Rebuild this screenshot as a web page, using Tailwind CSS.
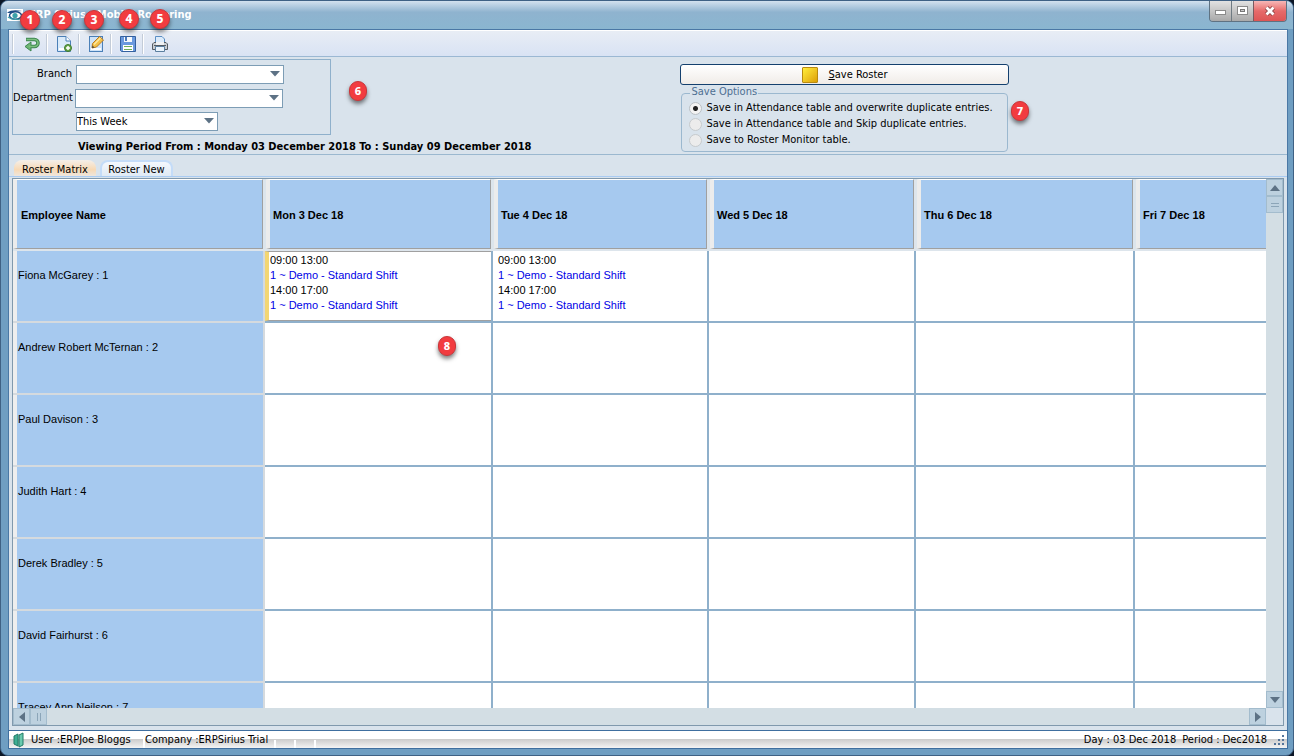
<!DOCTYPE html>
<html lang="en">
    <head>
        <meta charset="UTF-8" />
        <title>ERP Sirius - Mobile Rostering</title>
        <script src="https://cdn.jsdelivr.net/npm/@tailwindcss/browser@4"></script>
    </head>

    <body class="bg-[#0b1626]">
        <div class="relative flex flex-col h-screen overflow-hidden pl-[7px] pr-[5px] pb-1.5 rounded-lg border border-[#3f6184] bg-[#6f9ec2] font-['DejaVu_Sans_Condensed','DejaVu_Sans',sans-serif] text-[11px] leading-4 text-black">
            <!-- title bar -->
            <header class="flex items-start justify-between h-7 shrink-0 -ml-[7px] -mr-[5px] pl-1.5 pr-1.5 bg-linear-to-b from-[#d3e1ee] via-[#8fb3cf] via-40% to-[#8ab6d0]">
                <div class="flex items-center gap-1.5 pt-1.5">
                    <svg class="w-4 h-4" viewBox="0 0 16 16">
                        <rect y="2" width="16" height="12" fill="#fff" />
                        <path d="M0 5.500Q5 2 15 4Q9 4 6 5.500Q3 6.500 0 5.500Z" fill="#1d4c86" />
                        <ellipse cx="8.500" cy="8.500" rx="6" ry="3.800" fill="none" stroke="#1d4c86" stroke-width="1.400" />
                        <circle cx="8" cy="8.500" r="2.600" fill="#3ba0a8" />
                        <path d="M1 10Q6 14 15 11.500" fill="none" stroke="#3ba0a8" stroke-width="1.200" />
                    </svg>
                    <h1 class="font-bold text-white">ERP Sirius - Mobile Rostering</h1>
                </div>
                <div class="flex h-[21px] rounded-b border border-t-0 border-[#5f7282] overflow-hidden">
                    <button class="flex items-center justify-center w-[22px] border-r border-[#6f7a82] bg-linear-to-b from-[#e2e2e2] to-[#a9a9a9]" aria-label="Minimize">
                        <svg class="w-3 h-3" viewBox="0 0 12 12"><rect x=".500" y="5.500" width="10" height="4" fill="#fff" stroke="#8a8a8a" /></svg>
                    </button>
                    <button class="flex items-center justify-center w-[22px] border-r border-[#7a5a60] bg-linear-to-b from-[#e2e2e2] to-[#a9a9a9]" aria-label="Maximize">
                        <svg class="w-3 h-3" viewBox="0 0 12 12"><rect x=".500" y="1.500" width="10" height="8" fill="#fff" stroke="#8a8a8a" /><rect x="3.500" y="4.500" width="4" height="2" fill="#ccc" stroke="#777" /></svg>
                    </button>
                    <button class="flex items-center justify-center w-8 bg-linear-to-b from-[#f5b7b7] via-[#e66a6a] via-50% to-[#dd5555]" aria-label="Close">
                        <svg class="w-3 h-3" viewBox="0 0 12 12"><path d="M2.500 2.500L9.500 9.500M9.500 2.500L2.500 9.500" stroke="#8a4040" stroke-width="4.500" /><path d="M2.500 2.500L9.500 9.500M9.500 2.500L2.500 9.500" stroke="#fff" stroke-width="2.800" /></svg>
                    </button>
                </div>
            </header>

            <main class="flex flex-col flex-1 min-h-0 border border-b-0 border-[#4a78a5] bg-[#d9e3ec]">
                <!-- toolbar -->
                <nav class="flex items-center gap-2 h-[27px] shrink-0 pl-[3px] border-t border-b border-[#9bb8d3] border-t-white bg-linear-to-b from-[#e8edf5] to-[#d9e3f4]">
                    <span class="w-0.5 h-5 border-l border-[#c3ccd8] bg-white"></span>
                    <button class="w-4 h-4 ml-0.5" aria-label="Back">
                        <svg viewBox="0 0 16 16"><path d="M2 3.500H10.500A3.500 3.500 0 0 1 10.500 10.500H6" fill="none" stroke="#3d8650" stroke-width="3.600" /><path d="M7 6V15L1 10.500Z" fill="#6db573" stroke="#3d8650" /><path d="M2.500 3.500H10.500A3.500 3.500 0 0 1 10.500 10.500H5" fill="none" stroke="#7cc07f" stroke-width="1.600" /></svg>
                    </button>
                    <span class="w-0.5 h-5 -ml-0.5 border-l border-[#c3ccd8] bg-white"></span>
                    <button class="w-4 h-4" aria-label="New">
                        <svg viewBox="0 0 16 16"><path d="M1.500 .500H10L14.500 5V15.500H1.500Z" fill="#d9eafa" stroke="#4b80b8" /><path d="M10 .500V5H14.500" fill="#fff" stroke="#4b80b8" /><path d="M3 13H9" stroke="#fff" stroke-width="2" /><circle cx="12" cy="12" r="3.500" fill="#67a84c" stroke="#3e7a2d" /><path d="M12 10V14M10 12H14" stroke="#fff" stroke-width="1.500" /></svg>
                    </button>
                    <span class="w-0.5 h-5 -ml-0.5 border-l border-[#c3ccd8] bg-white"></span>
                    <button class="w-4 h-4" aria-label="Edit">
                        <svg viewBox="0 0 16 16"><rect x="1.500" y=".500" width="13" height="15" fill="#cfe3f8" stroke="#4b80b8" /><path d="M3 13H13" stroke="#fff" stroke-width="2" /><path d="M4.500 7.500L11.500 .500L15.500 4L8.500 11L4 12Z" fill="#f4c24a" stroke="#b97b22" /><path d="M6 8.500L12.500 2" stroke="#fde9a6" stroke-width="1.500" /><path d="M4 12L4.500 9.500L6.500 11.500Z" fill="#444" /></svg>
                    </button>
                    <span class="w-0.5 h-5 -ml-0.5 border-l border-[#c3ccd8] bg-white"></span>
                    <button class="w-4 h-4" aria-label="Save">
                        <svg viewBox="0 0 16 16"><path d="M.500 .500H15.500V15.500H1.500L.500 14.500Z" fill="#6b9ade" stroke="#34609f" /><rect x="4" y="1" width="8" height="5" fill="#f4f8fc" /><rect x="5" y="1" width="2" height="4" fill="#4a78b8" /><rect x="3" y="9" width="10" height="6" fill="#fff" /><path d="M4 10.500H12M4 13.500H12" stroke="#6fae58" /></svg>
                    </button>
                    <span class="w-0.5 h-5 -ml-0.5 border-l border-[#c3ccd8] bg-white"></span>
                    <button class="w-4 h-4" aria-label="Print">
                        <svg viewBox="0 0 16 16"><path d="M3.500 8V.500H10L12.500 3V8" fill="#dcebfa" stroke="#5b8fc4" /><path d="M2 6.500H14L15.500 8V13.500H.500V8Z" fill="#c9cdd1" stroke="#555c63" /><path d="M4 6H12V9H4Z" fill="#f0f2f4" /><path d="M3.500 10.500H12.500V15.500H3.500Z" fill="#eaf4fd" stroke="#5b7f9f" /><path d="M2 9.500H14" stroke="#555c63" /></svg>
                    </button>
                </nav>

                <!-- filters and save options -->
                <section class="flex items-start h-[98px] shrink-0 pl-[3px] pt-0.5 border-b border-[#9bb8cf]">
                    <div class="flex flex-col">
                        <div class="flex flex-col gap-1 w-[319px] h-[76px] pt-1 border border-[#8fb0cb]">
                            <div class="flex items-center gap-1 h-5">
                                <label for="branch" class="w-[59px] text-right">Branch</label>
                                <div class="relative">
                                    <select id="branch" class="block appearance-none w-52 h-[19px] border border-[#7d9db5] bg-white"></select>
                                    <svg class="absolute right-1 top-1.5 w-2.5 h-1.5 pointer-events-none" viewBox="0 0 10 6"><path d="M0 0H10L5 5.500Z" fill="#5d7285" /></svg>
                                </div>
                            </div>
                            <div class="flex items-center gap-0.5 h-5">
                                <label for="department" class="w-[60px] text-right">Department</label>
                                <div class="relative">
                                    <select id="department" class="block appearance-none w-52 h-[19px] border border-[#7d9db5] bg-white"></select>
                                    <svg class="absolute right-1 top-1.5 w-2.5 h-1.5 pointer-events-none" viewBox="0 0 10 6"><path d="M0 0H10L5 5.500Z" fill="#5d7285" /></svg>
                                </div>
                            </div>
                            <div class="relative ml-[63px] w-[142px]">
                                <select class="block appearance-none w-full h-[19px] border border-[#7d9db5] bg-white" aria-label="Period">
                                    <option>This Week</option>
                                </select>
                                <svg class="absolute right-1 top-1.5 w-2.5 h-1.5 pointer-events-none" viewBox="0 0 10 6"><path d="M0 0H10L5 5.500Z" fill="#5d7285" /></svg>
                            </div>
                        </div>
                        <p class="pl-[66px] pt-1 font-bold whitespace-nowrap">Viewing Period From : Monday 03 December 2018 To : Sunday 09 December 2018</p>
                    </div>
                    <div class="w-[329px] ml-[149px] pt-[5px]">
                        <button class="flex items-center justify-center gap-2.5 w-full h-[21px] border border-[#14406e] rounded-[3px] bg-linear-to-b from-white to-[#f0ece8]">
                            <span class="w-4 h-4 rounded-[1px] border border-[#b88a10] bg-linear-to-br from-[#ffee3a] to-[#dda000]"></span>
                            <span><u>S</u>ave Roster</span>
                        </button>
                        <fieldset class="relative flex flex-col mx-px mt-2 h-[59px] pt-1.5 pl-[7px] border border-[#9bb8cf] rounded">
                            <legend class="absolute left-2 -top-2 px-px bg-[#d9e3ec] leading-3 text-[#4e6f92]">Save Options</legend>
                            <label class="flex items-center gap-1 h-4 whitespace-nowrap">
                                <input type="radio" name="save" class="appearance-none w-[13px] h-[13px] rounded-full border border-[#b9bfc4] bg-[#f3f3f3] checked:bg-[radial-gradient(circle,#222_0_2px,#f3f3f3_3px)]" checked>
                                Save in Attendance table and overwrite duplicate entries.
                            </label>
                            <label class="flex items-center gap-1 h-4 whitespace-nowrap">
                                <input type="radio" name="save" class="appearance-none w-[13px] h-[13px] rounded-full border border-[#c6cacd] bg-[#ececec]">
                                Save in Attendance table and Skip duplicate entries.
                            </label>
                            <label class="flex items-center gap-1 h-4 whitespace-nowrap">
                                <input type="radio" name="save" class="appearance-none w-[13px] h-[13px] rounded-full border border-[#c6cacd] bg-[#ececec]">
                                Save to Roster Monitor table.
                            </label>
                        </fieldset>
                    </div>
                </section>

                <!-- tabs -->
                <div class="flex items-end gap-1 h-[21px] shrink-0 pl-[5px]">
                    <button class="w-[82px] h-4 rounded-t-lg pt-0.5 bg-linear-to-b from-[#f4efe9] via-[#f8d9b4] via-60% to-[#eee6dd] whitespace-nowrap">Roster Matrix</button>
                    <button class="w-[73px] h-4 rounded-t-lg pt-0.5 border-2 border-b-0 border-[#c4dcf8] bg-linear-to-b from-[#f4f8fd] to-[#e0eaf4] whitespace-nowrap flex items-center justify-center">Roster New</button>
                </div>

                <!-- roster grid -->
                <section class="flex flex-col flex-1 min-h-0 px-[3px] pt-px pb-1 border-t border-[#a9cbf2]">
                    <div class="flex flex-col flex-1 min-h-0 border border-[#8099ad]">
                        <div class="flex flex-1 min-h-0">
                            <div class="flex-1 min-w-0 overflow-hidden bg-white font-['Liberation_Sans',Arial,sans-serif]">
                                <table class="w-full table-fixed border-separate border-spacing-0 text-left">
                                    <colgroup>
                                        <col class="w-[252px]">
                                        <col class="w-[228px]">
                                        <col class="w-[216px]">
                                        <col class="w-[207px]">
                                        <col class="w-[219px]">
                                        <col>
                                    </colgroup>
                                    <thead>
                                        <tr class="h-[72px] bg-[#dde5ec]">
                                            <th class="p-0 pb-0.5"><div class="flex items-center h-[70px] pt-0.5 pl-1 border-l-4 border-r border-b border-t border-[#a0a0a0] border-l-[#ececec] border-t-white bg-[#a6c9ef] mr-0.5">Employee Name</div></th>
                                            <th class="p-0 pb-0.5"><div class="flex items-center h-[70px] pt-0.5 pl-[3px] border-l-4 border-r border-b border-t border-[#a0a0a0] border-l-[#ececec] border-t-white bg-[#a6c9ef] ml-px mr-0.5">Mon 3 Dec 18</div></th>
                                            <th class="p-0 pb-0.5"><div class="flex items-center h-[70px] pt-0.5 pl-[3px] border-l-4 border-r border-b border-t border-[#a0a0a0] border-l-[#ececec] border-t-white bg-[#a6c9ef] ml-px mr-0.5">Tue 4 Dec 18</div></th>
                                            <th class="p-0 pb-0.5"><div class="flex items-center h-[70px] pt-0.5 pl-[3px] border-l-4 border-r border-b border-t border-[#a0a0a0] border-l-[#ececec] border-t-white bg-[#a6c9ef] ml-px mr-0.5">Wed 5 Dec 18</div></th>
                                            <th class="p-0 pb-0.5"><div class="flex items-center h-[70px] pt-0.5 pl-[3px] border-l-4 border-r border-b border-t border-[#a0a0a0] border-l-[#ececec] border-t-white bg-[#a6c9ef] ml-px mr-0.5">Thu 6 Dec 18</div></th>
                                            <th class="p-0 pb-0.5"><div class="flex items-center h-[70px] pt-0.5 pl-[3px] border-l-4 border-b border-t border-[#a0a0a0] border-l-[#ececec] border-t-white bg-[#a6c9ef] ml-px">Fri 7 Dec 18</div></th>
                                        </tr>
                                    </thead>
                                    <tbody id="roster"></tbody>
                                </table>
                            </div>
                            <!-- vertical scrollbar -->
                            <div class="flex flex-col w-[17px] bg-[#d3dee4]">
                                <button class="flex items-center justify-center h-[17px] border border-[#a3bccd] bg-[#bdd1df]" aria-label="Scroll up">
                                    <svg class="w-2.5 h-1.5" viewBox="0 0 10 6"><path d="M0 6H10L5 0Z" fill="#5d7285" /></svg>
                                </button>
                                <span class="flex items-center justify-center h-[17px] border border-[#a3bccd] bg-[#bdd1df]">
                                    <svg class="w-2 h-2" viewBox="0 0 8 8"><path d="M0 2.500H8M0 5.500H8" stroke="#8ba5b8" /></svg>
                                </span>
                                <button class="flex items-center justify-center h-[17px] mt-auto border border-[#a3bccd] bg-[#bdd1df]" aria-label="Scroll down">
                                    <svg class="w-2.5 h-1.5" viewBox="0 0 10 6"><path d="M0 0H10L5 6Z" fill="#5d7285" /></svg>
                                </button>
                            </div>
                        </div>
                        <!-- horizontal scrollbar -->
                        <div class="flex h-[17px] shrink-0 mr-[17px] bg-[#d3dee4]">
                            <button class="flex items-center justify-center w-[17px] border border-[#a3bccd] bg-[#bdd1df]" aria-label="Scroll left">
                                <svg class="w-1.5 h-2.5" viewBox="0 0 6 10"><path d="M6 0V10L0 5Z" fill="#5d7285" /></svg>
                            </button>
                            <span class="flex items-center justify-center w-[17px] border border-[#a3bccd] bg-[#bdd1df]">
                                <svg class="w-2 h-2" viewBox="0 0 8 8"><path d="M2.500 0V8M5.500 0V8" stroke="#8ba5b8" /></svg>
                            </span>
                            <button class="flex items-center justify-center w-[17px] ml-auto border border-[#a3bccd] bg-[#bdd1df]" aria-label="Scroll right">
                                <svg class="w-1.5 h-2.5" viewBox="0 0 6 10"><path d="M0 0V10L6 5Z" fill="#5d7285" /></svg>
                            </button>
                        </div>
                    </div>
                </section>
            </main>

            <!-- status bar -->
            <footer class="flex items-center h-[19px] shrink-0 border border-[#3f6f9f] bg-linear-to-b from-white from-45% via-[#cdcdcd] via-50% to-[#f4f4f4] whitespace-nowrap">
                <svg class="w-4 h-4 ml-0.5 mr-1" viewBox="0 0 16 16"><path d="M3 4L7 2V14L3 12Z" fill="#3fae92" stroke="#217a66" /><path d="M8 3L12 1V13L8 15Z" fill="#69c9ae" stroke="#217a66" /></svg>
                <span class="w-[112px]">User :ERPJoe Bloggs</span>
                <span class="w-[131px] border-l-2 border-white">Company :ERPSirius Trial</span>
                <span class="w-5 h-2 mt-2 border-l-2 border-white"></span>
                <span class="w-5 h-2 mt-2 border-l-2 border-white"></span>
                <span class="w-5 h-2 mt-2 border-l-2 border-white"></span>
                <span class="ml-auto mr-1.5">Day : 03 Dec 2018</span>
                <span class="mr-1.5">Period : Dec2018</span>
                <svg class="w-3 h-3 mr-0.5" viewBox="0 0 12 12" fill="#54749a"><rect x="9" y="1" width="2" height="2" /><rect x="5" y="5" width="2" height="2" /><rect x="9" y="5" width="2" height="2" /><rect x="1" y="9" width="2" height="2" /><rect x="5" y="9" width="2" height="2" /><rect x="9" y="9" width="2" height="2" /></svg>
            </footer>

            <!-- numbered callouts -->
            <span class="absolute left-[19px] top-[9px] flex items-center justify-center w-5 h-5 rounded-full bg-[#f23c40] border border-[#c9373b] shadow-[0_3px_4px_rgba(0,0,0,0.5)] font-['Noto_Sans',sans-serif] text-xs font-extrabold text-white">1</span>
            <span class="absolute left-[51px] top-[9px] flex items-center justify-center w-5 h-5 rounded-full bg-[#f23c40] border border-[#c9373b] shadow-[0_3px_4px_rgba(0,0,0,0.5)] font-['Noto_Sans',sans-serif] text-xs font-extrabold text-white">2</span>
            <span class="absolute left-[83px] top-[9px] flex items-center justify-center w-5 h-5 rounded-full bg-[#f23c40] border border-[#c9373b] shadow-[0_3px_4px_rgba(0,0,0,0.5)] font-['Noto_Sans',sans-serif] text-xs font-extrabold text-white">3</span>
            <span class="absolute left-[118px] top-2 flex items-center justify-center w-5 h-5 rounded-full bg-[#f23c40] border border-[#c9373b] shadow-[0_3px_4px_rgba(0,0,0,0.5)] font-['Noto_Sans',sans-serif] text-xs font-extrabold text-white">4</span>
            <span class="absolute left-[149px] top-2 flex items-center justify-center w-5 h-5 rounded-full bg-[#f23c40] border border-[#c9373b] shadow-[0_3px_4px_rgba(0,0,0,0.5)] font-['Noto_Sans',sans-serif] text-xs font-extrabold text-white">5</span>
            <span class="absolute left-[348px] top-[80px] flex items-center justify-center w-[18px] h-5 rounded-full bg-[#f23c40] border border-[#c9373b] shadow-[0_3px_4px_rgba(0,0,0,0.5)] font-['Noto_Sans',sans-serif] font-extrabold text-white">6</span>
            <span class="absolute left-[1010px] top-[100px] flex items-center justify-center w-[18px] h-5 rounded-full bg-[#f23c40] border border-[#c9373b] shadow-[0_3px_4px_rgba(0,0,0,0.5)] font-['Noto_Sans',sans-serif] font-extrabold text-white">7</span>
            <span class="absolute left-[437px] top-[335px] flex items-center justify-center w-[18px] h-5 rounded-full bg-[#f23c40] border border-[#c9373b] shadow-[0_3px_4px_rgba(0,0,0,0.5)] font-['Noto_Sans',sans-serif] font-extrabold text-white">8</span>
        </div>

        <script>
            const employees = ["Fiona McGarey", "Andrew Robert McTernan", "Paul Davison", "Judith Hart", "Derek Bradley", "David Fairhurst", "Tracey Ann Neilson"];
            const shift = "09:00 13:00<br><a href='#' class='text-[#0000e6]'>1 ~ Demo - Standard Shift</a><br>14:00 17:00<br><a href='#' class='text-[#0000e6]'>1 ~ Demo - Standard Shift</a>";
            const cell = "p-0 border-r-2 border-b-2 border-[#8fb0cb] align-top";

            document.getElementById("roster").innerHTML = employees.map((name, i) => {
                let row = `<tr class="h-[72px]"><th class="p-0 border-r-2 border-b-2 border-[#d5dade] bg-[#a6c9ef] align-top font-normal"><div class="h-[70px] pt-4 pl-px border-l-4 border-[#eeeeee]">${name} : ${i + 1}</div></th>`;
                if (i == 0) {
                    row += `<td class="${cell}"><div class="h-[70px] pl-px pt-px border-y border-l-4 border-[#a0a0a0] border-l-[#f3d673] leading-[15px]">${shift}</div></td>`;
                    row += `<td class="${cell}"><div class="h-[70px] pl-[5px] pt-0.5 leading-[15px]">${shift}</div></td>`;
                } else {
                    row += `<td class="${cell}"></td><td class="${cell}"></td>`;
                }
                return row + `<td class="${cell}"></td><td class="${cell}"></td><td class="p-0 border-b-2 border-[#8fb0cb]"></td></tr>`;
            }).join("");
        </script>
    </body>
</html>
